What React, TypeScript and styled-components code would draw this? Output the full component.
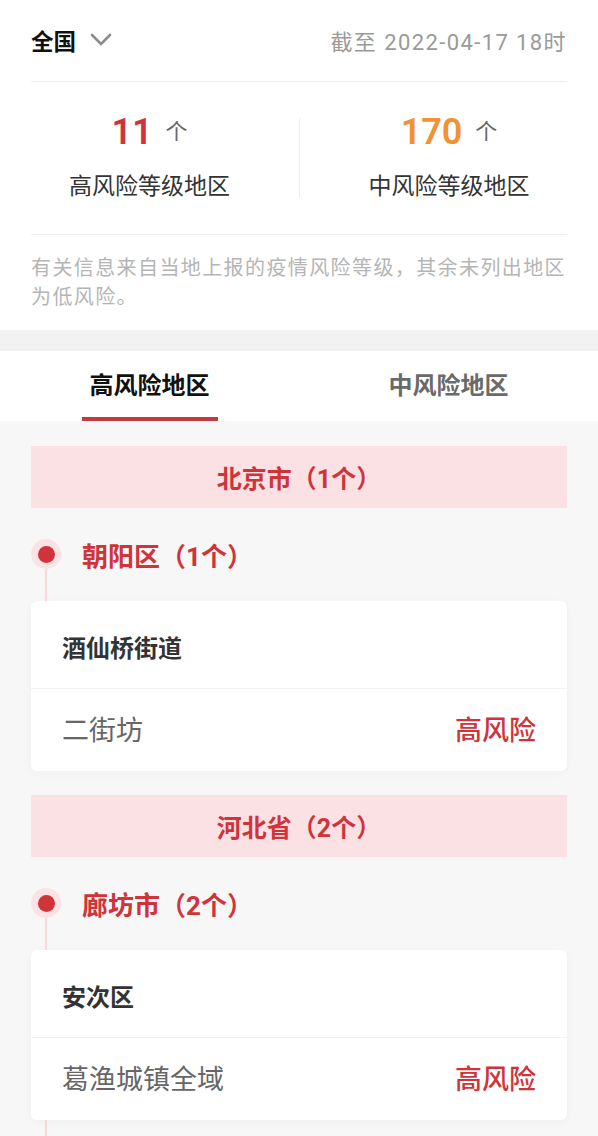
import React from 'react'
import styled, { createGlobalStyle } from 'styled-components'

const RED = '#d0343a'
const ORANGE = '#f29232'
const PINK = '#fbe1e4'

const GlobalStyle = createGlobalStyle`
  html, body {
    margin: 0;
    padding: 0;
    background: #f7f7f7;
  }
  body {
    font-family: Roboto, "Noto Sans CJK SC", "Noto Sans", sans-serif;
    -webkit-font-smoothing: antialiased;
  }
  * {
    box-sizing: border-box;
  }
`

const Page = styled.div`
  width: 100%;
  min-height: 100vh;
  background: #f7f7f7;
`

const Summary = styled.section`
  background: #fff;
`

const TopBar = styled.div`
  height: 82px;
  margin: 0 31px;
  display: flex;
  align-items: center;
  justify-content: space-between;
  border-bottom: 1px solid #f0f0f0;
  padding-bottom: 2px;
`

const RegionPicker = styled.div`
  display: flex;
  align-items: center;
  gap: 14px;
  font-size: 22.5px;
  font-weight: 700;
  color: #111;
`

const UpdatedAt = styled.div`
  font-size: 22px;
  letter-spacing: 1.4px;
  color: #9a9a9a;
`

const StatsRow = styled.div`
  height: 152px;
  display: grid;
  grid-template-columns: 1fr 1fr;
  align-items: center;
`

const StatCell = styled.div<{ divided?: boolean }>`
  height: 80px;
  display: flex;
  flex-direction: column;
  align-items: center;
  justify-content: space-between;
  border-left: ${({ divided }) => (divided ? '1px solid #eeeeee' : 'none')};
`

const StatValue = styled.div`
  display: flex;
  align-items: center;
  line-height: 28px;
  height: 28px;
`

const Count = styled.span<{ tone: string }>`
  font-size: 36px;
  font-weight: 600;
  color: ${({ tone }) => tone};
`

const Unit = styled.span`
  margin-left: 13px;
  font-size: 22px;
  color: #666;
`

const StatLabel = styled.div`
  font-size: 23px;
  line-height: 22px;
  color: #333;
`

const Note = styled.p`
  margin: 0 31px;
  padding: 19px 0 18px;
  border-top: 1px solid #f0f0f0;
  font-size: 20px;
  line-height: 29px;
  letter-spacing: 1.4px;
  color: #b5b5b5;
`

const Band = styled.div`
  height: 21px;
  background: #f2f2f2;
`

const Tabs = styled.nav`
  height: 70px;
  background: #fff;
  display: grid;
  grid-template-columns: 1fr 1fr;
`

const Tab = styled.div<{ active?: boolean }>`
  display: flex;
  flex-direction: column;
  align-items: center;
  padding-top: 20px;
  font-size: 24px;
  font-weight: 700;
  color: ${({ active }) => (active ? '#111' : '#6a6a6a')};
`

const TabLabel = styled.span`
  line-height: 30px;
`

const TabBar = styled.span<{ active?: boolean }>`
  margin-top: 16px;
  width: 136px;
  height: 4px;
  background: ${({ active }) => (active ? '#c13a40' : 'transparent')};
`

const List = styled.div`
  padding: 25px 31px 0;
`

const Province = styled.div`
  & + & {
    margin-top: 24px;
  }
`

const ProvinceBanner = styled.div`
  height: 62px;
  display: flex;
  align-items: center;
  justify-content: center;
  background: ${PINK};
  color: ${RED};
  font-size: 25px;
  font-weight: 700;
`

const CityRow = styled.div`
  height: 93px;
  display: flex;
`

const Marker = styled.div`
  width: 30px;
  display: flex;
  flex-direction: column;
  align-items: center;
  padding-top: 31px;
`

const Dot = styled.span`
  width: 30px;
  height: 30px;
  border-radius: 50%;
  background: #fbe3e5;
  display: flex;
  align-items: center;
  justify-content: center;
  flex-shrink: 0;

  &::after {
    content: '';
    width: 17px;
    height: 17px;
    border-radius: 50%;
    background: ${RED};
  }
`

const Stem = styled.span`
  flex: 1;
  width: 2px;
  background: #f9d6da;
`

const CityName = styled.div`
  align-self: center;
  margin-left: 21px;
  font-size: 26px;
  font-weight: 700;
  color: ${RED};
`

const Connector = styled.div`
  height: 24px;
  margin-left: 14px;
  border-left: 2px solid #f9d6da;
`

const Card = styled.div`
  background: #fff;
  border-radius: 6px;
  box-shadow: 0 2px 10px rgba(0, 0, 0, 0.035);
`

const DistrictRow = styled.div`
  height: 88px;
  display: flex;
  align-items: center;
  padding: 3px 31px 0;
  border-bottom: 1px solid #f2f2f2;
  font-size: 24px;
  font-weight: 700;
  color: #333;
`

const AreaRow = styled.div`
  height: 82px;
  display: flex;
  align-items: center;
  justify-content: space-between;
  padding: 0 31px 3px;
  font-size: 27px;

  & + & {
    border-top: 1px solid #f2f2f2;
  }
`

const AreaName = styled.span`
  color: #666;
`

const AreaLevel = styled.span`
  color: ${RED};
  font-weight: 500;
`

const Chevron = () => (
  <svg width="22" height="14" viewBox="0 0 22 14" fill="none">
    <polyline
      points="2,2 11,11 20,2"
      stroke="#8c8c8c"
      strokeWidth="2.6"
      strokeLinecap="round"
      strokeLinejoin="round"
    />
  </svg>
)

type District = { name: string; areas: string[] }
type City = { name: string; districts: District[] }
type ProvinceData = { name: string; cities: City[] }

const HIGH_RISK: ProvinceData[] = [
  {
    name: '北京市（1个）',
    cities: [
      {
        name: '朝阳区（1个）',
        districts: [{ name: '酒仙桥街道', areas: ['二街坊'] }]
      }
    ]
  },
  {
    name: '河北省（2个）',
    cities: [
      {
        name: '廊坊市（2个）',
        districts: [
          { name: '安次区', areas: ['葛渔城镇全域'] },
          { name: '广阳区', areas: ['北旺乡全域'] }
        ]
      }
    ]
  }
]

export default function App() {
  return (
    <Page>
      <GlobalStyle />
      <Summary>
        <TopBar>
          <RegionPicker>
            全国
            <Chevron />
          </RegionPicker>
          <UpdatedAt>截至 2022-04-17 18时</UpdatedAt>
        </TopBar>
        <StatsRow>
          <StatCell>
            <StatValue>
              <Count tone={RED}>11</Count>
              <Unit>个</Unit>
            </StatValue>
            <StatLabel>高风险等级地区</StatLabel>
          </StatCell>
          <StatCell divided>
            <StatValue>
              <Count tone={ORANGE}>170</Count>
              <Unit>个</Unit>
            </StatValue>
            <StatLabel>中风险等级地区</StatLabel>
          </StatCell>
        </StatsRow>
        <Note>有关信息来自当地上报的疫情风险等级，其余未列出地区为低风险。</Note>
      </Summary>
      <Band />
      <Tabs>
        <Tab active>
          <TabLabel>高风险地区</TabLabel>
          <TabBar active />
        </Tab>
        <Tab>
          <TabLabel>中风险地区</TabLabel>
          <TabBar />
        </Tab>
      </Tabs>
      <List>
        {HIGH_RISK.map((p) => (
          <Province key={p.name}>
            <ProvinceBanner>{p.name}</ProvinceBanner>
            {p.cities.map((c) => (
              <React.Fragment key={c.name}>
                <CityRow>
                  <Marker>
                    <Dot />
                    <Stem />
                  </Marker>
                  <CityName>{c.name}</CityName>
                </CityRow>
                {c.districts.map((d, i) => (
                  <React.Fragment key={d.name}>
                    {i > 0 && <Connector />}
                    <Card>
                      <DistrictRow>{d.name}</DistrictRow>
                      {d.areas.map((a) => (
                        <AreaRow key={a}>
                          <AreaName>{a}</AreaName>
                          <AreaLevel>高风险</AreaLevel>
                        </AreaRow>
                      ))}
                    </Card>
                  </React.Fragment>
                ))}
              </React.Fragment>
            ))}
          </Province>
        ))}
      </List>
    </Page>
  )
}
